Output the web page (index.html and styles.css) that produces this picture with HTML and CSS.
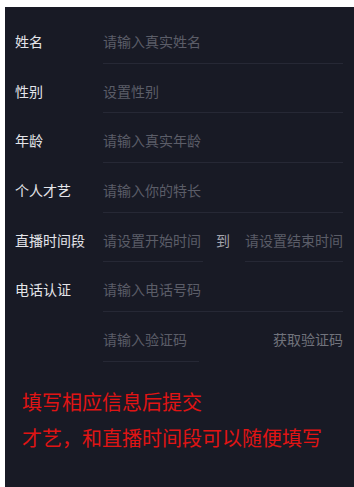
FILE: index.html
```html
<!DOCTYPE html>
<html lang="zh">
<head>
<meta charset="utf-8">
<link rel="stylesheet" href="styles.css">
</head>
<body>
<div class="panel">
  <div class="row">
    <div class="label">姓名</div>
    <div class="field"><span class="ph">请输入真实姓名</span></div>
  </div>
  <div class="row">
    <div class="label">性别</div>
    <div class="field"><span class="ph">设置性别</span></div>
  </div>
  <div class="row">
    <div class="label">年龄</div>
    <div class="field"><span class="ph">请输入真实年龄</span></div>
  </div>
  <div class="row">
    <div class="label">个人才艺</div>
    <div class="field"><span class="ph">请输入你的特长</span></div>
  </div>
  <div class="row">
    <div class="label">直播时间段</div>
    <div class="field time"><span class="ph">请设置开始时间</span></div>
    <div class="to">到</div>
    <div class="field"><span class="ph">请设置结束时间</span></div>
  </div>
  <div class="row">
    <div class="label">电话认证</div>
    <div class="field"><span class="ph">请输入电话号码</span></div>
  </div>
  <div class="row">
    <div class="label"></div>
    <div class="field code"><span class="ph">请输入验证码</span></div>
    <div class="getcode">获取验证码</div>
  </div>
  <div class="note">
    <p>填写相应信息后提交</p>
    <p>才艺，和直播时间段可以随便填写</p>
  </div>
</div>
</body>
</html>
```
FILE: styles.css
```css
html, body {
  margin: 0;
  padding: 0;
  background: #ffffff;
}
html {
  overflow: hidden;
}
body {
  font-family: "Noto Sans CJK SC", "Noto Sans", sans-serif;
  font-size: 14px;
}
.panel {
  margin: 7px 0 0 5px;
  min-height: 480px;
  background: #181a25;
  padding-top: 7px;
  box-sizing: border-box;
}
.row {
  display: flex;
  height: 49.7px;
  padding-right: 11px;
}
.label {
  flex: 0 0 98px;
  padding-left: 10px;
  box-sizing: border-box;
  color: #e4e5ea;
  line-height: 20px;
  padding-top: 17px;
  white-space: nowrap;
}
.field {
  flex: 1;
  border-bottom: 1px solid #262835;
  line-height: 20px;
  padding-top: 17px;
  white-space: nowrap;
}
.field.time {
  flex: 0 0 100px;
}
.field.code {
  flex: 0 0 96px;
  margin-right: auto;
}
.ph {
  color: #5b5d68;
}
.to {
  flex: 0 0 40px;
  text-align: center;
  color: #a4a5ad;
  line-height: 20px;
  padding-top: 17px;
  margin-right: 2px;
}
.getcode {
  color: #71737c;
  line-height: 20px;
  padding-top: 17px;
  white-space: nowrap;
}
.note {
  padding: 22px 0 0 17px;
  color: #e01414;
  font-size: 20px;
  line-height: 36px;
}
.note p {
  margin: 0;
}
```
